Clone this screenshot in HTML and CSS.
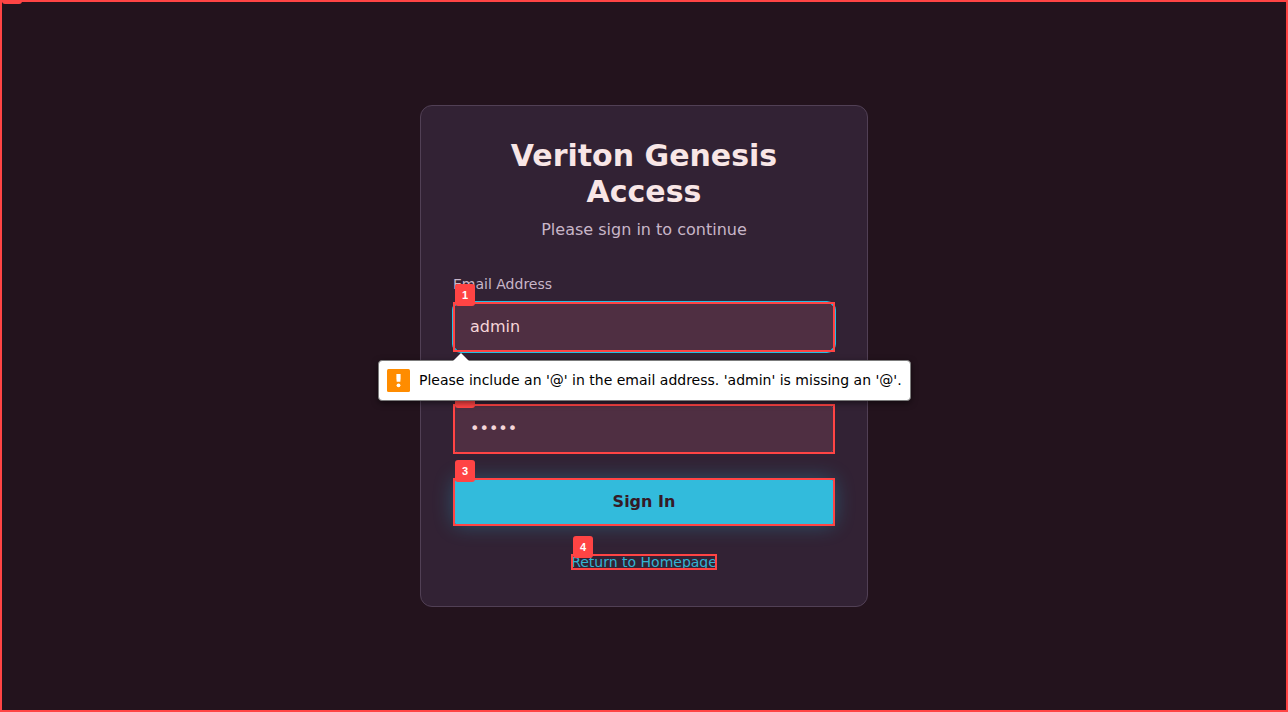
FILE: index.html
```
<!DOCTYPE html>
<html lang="en">
<head>
<meta charset="utf-8">
<title>Veriton Genesis Access</title>
<link rel="stylesheet" href="styles.css">
</head>
<body>
<main class="page">
  <span class="outline"><span class="badge"></span></span>
  <section class="card">
    <header class="card-header">
      <h1 class="title">Veriton Genesis Access</h1>
      <p class="subtitle">Please sign in to continue</p>
    </header>
    <form class="form" novalidate>
      <div class="field">
        <label class="label" for="email">Email Address</label>
        <div class="control">
          <input class="input input-active" id="email" type="email" value="admin">
          <span class="outline"><span class="badge">1</span></span>
          <div class="tooltip" role="alert">
            <svg class="tooltip-arrow" width="18" height="9" viewBox="0 0 18 9"><path d="M0 9 L9 0 L18 9 Z" fill="#fff"/></svg>
            <svg class="tooltip-icon" width="23" height="23" viewBox="0 0 23 23"><rect width="23" height="23" rx="1.5" fill="#ff8c00"/><path d="M9.4 5h4.2v4.5l-.3 3.3H9.7l-.3-3.3z" fill="#fff"/><circle cx="11.5" cy="16.3" r="1.9" fill="#fff"/></svg>
            <span class="tooltip-text">Please include an '@' in the email address. 'admin' is missing an '@'.</span>
          </div>
        </div>
      </div>
      <div class="field">
        <label class="label" for="password">Password</label>
        <div class="control">
          <input class="input" id="password" type="password" value="admin">
          <span class="outline"><span class="badge">2</span></span>
        </div>
      </div>
      <div class="control">
        <button class="button" type="submit">Sign In</button>
        <span class="outline"><span class="badge">3</span></span>
      </div>
    </form>
    <p class="footer">
      <a class="link" href="#">Return to Homepage<span class="outline"><span class="badge">4</span></span></a>
    </p>
  </section>
</main>
</body>
</html>
```
FILE: styles.css
```
* {
  box-sizing: border-box;
}

body {
  margin: 0;
  background: #23131d;
  color: #f8e6e6;
  font: 16px/24px "DejaVu Sans", sans-serif;
}

.page {
  position: relative;
  display: flex;
  align-items: center;
  justify-content: center;
  min-height: 100vh;
  overflow: hidden;
}

.card {
  width: 100%;
  max-width: 448px;
  padding: 32px;
  border: 1px solid #514055;
  border-radius: 12px;
  background: #322234;
}

.card-header {
  margin-bottom: 32px;
  text-align: center;
}

.title {
  margin: 0 0 8px;
  font-size: 30px;
  line-height: 36px;
  font-weight: 700;
}

.subtitle {
  margin: 0;
  color: #c8b6c8;
}

.form {
  display: flex;
  flex-direction: column;
  gap: 24px;
}

.field {
  display: flex;
  flex-direction: column;
  gap: 8px;
}

.label {
  color: #c8b6c8;
  font-size: 14px;
  line-height: 20px;
}

.control {
  position: relative;
}

.input {
  display: block;
  width: 100%;
  height: 50px;
  padding: 12px 16px 14px;
  border: 1px solid #65485c;
  border-radius: 8px;
  outline: none;
  background: #4f2f42;
  color: #f5d5d8;
  font: inherit;
}

.input-active {
  border-color: #22c0e4;
  box-shadow: 0 0 0 1px #22c0e4;
}

.button {
  display: block;
  width: 100%;
  padding: 12px 16px;
  border: 0;
  border-radius: 8px;
  background: #32bbdc;
  box-shadow: 0 0 20px rgba(34, 192, 228, 0.3);
  color: #351a26;
  font: inherit;
  font-weight: 700;
}

.footer {
  margin: 24px 0 0;
  text-align: center;
}

.link {
  position: relative;
  color: #32b3d2;
  font-size: 14px;
  text-decoration: none;
}

/* Numbered element markers */
.outline {
  position: absolute;
  inset: 0;
  border: 2px solid #ff4444;
  pointer-events: none;
}

.badge {
  position: absolute;
  top: -20px;
  left: 0;
  width: 20px;
  height: 22px;
  border-radius: 3px;
  background: #ff4444;
  color: #fff;
  font: 700 11px/22px "Liberation Sans", sans-serif;
  text-align: center;
}

/* Validation bubble */
.tooltip {
  position: absolute;
  z-index: 2;
  top: 58px;
  left: -75px;
  display: flex;
  align-items: center;
  gap: 9px;
  padding: 8px;
  border: 1px solid #7c7c7c;
  border-radius: 4px;
  background: #fff;
  box-shadow: 0 2px 6px rgba(0, 0, 0, 0.5);
  color: #000;
  font-size: 14px;
  line-height: 23px;
  white-space: nowrap;
}

.tooltip-arrow {
  position: absolute;
  top: -8px;
  left: 73px;
}
```
